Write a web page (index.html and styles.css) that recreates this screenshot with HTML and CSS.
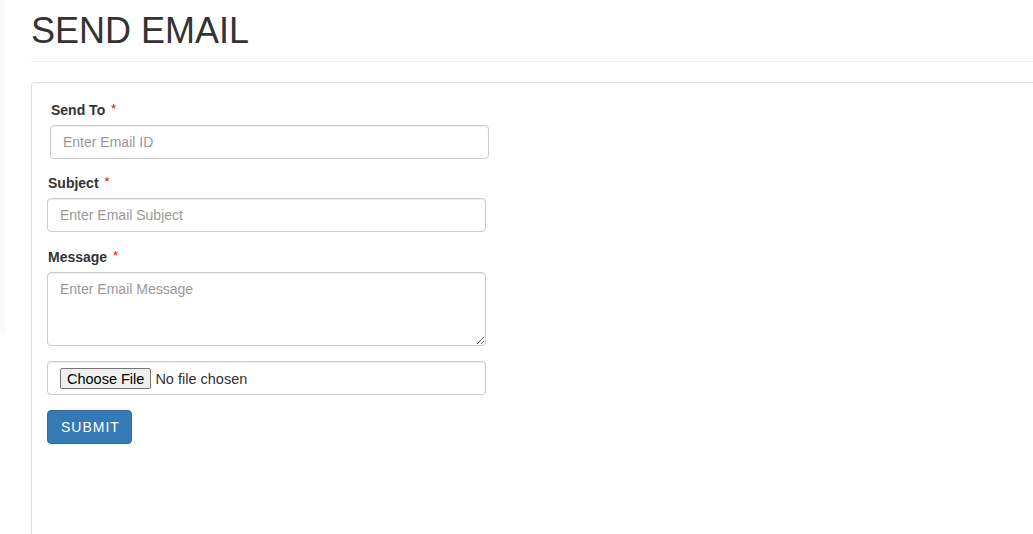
FILE: index.html
```html
<!DOCTYPE html>
<html lang="en">
<head>
<meta charset="utf-8">
<title>Send Email</title>
<link rel="stylesheet" href="styles.css">
</head>
<body>
<div class="layout">
  <div class="edge"></div>
  <main class="main">
    <div class="page-header">
      <h1>SEND EMAIL</h1>
    </div>
    <div class="panel">
      <form class="panel-body">
        <div class="form-group first">
          <label>Send To <span class="req">*</span></label>
          <input class="form-control" type="email" placeholder="Enter Email ID">
        </div>
        <div class="form-group">
          <label>Subject <span class="req">*</span></label>
          <input class="form-control" type="text" placeholder="Enter Email Subject">
        </div>
        <div class="form-group">
          <label>Message <span class="req">*</span></label>
          <textarea class="form-control textarea" placeholder="Enter Email Message"></textarea>
        </div>
        <div class="form-group">
          <input class="form-control file" type="file">
        </div>
        <button type="button" class="btn">SUBMIT</button>
      </form>
    </div>
  </main>
</div>
</body>
</html>
```
FILE: styles.css
```css
* { box-sizing: border-box; }
html, body { margin: 0; padding: 0; background: #fff; }
body {
  font-family: "Liberation Sans", Arial, Helvetica, sans-serif;
  font-size: 14px;
  line-height: 20px;
  color: #333;
  overflow: hidden;
  height: 534px;
}
.layout { display: flex; align-items: flex-start; }
.edge { width: 6px; height: 335px; background: #fafafa; flex: none; }
.main { flex: 1; padding-left: 25px; min-width: 0; }
.page-header {
  padding-top: 11px;
  padding-bottom: 10px;
  border-bottom: 1px solid #eee;
  margin-bottom: 20px;
}
.page-header h1 {
  margin: 0;
  font-size: 36px;
  font-weight: 500;
  line-height: 40px;
  color: #333;
}
.panel {
  border: 1px solid #ddd;
  border-radius: 4px;
  margin-right: -10px;
  height: 520px;
}
.panel-body { padding: 17px 15px 14px 15px; }
.form-group { margin-bottom: 15px; width: 439px; }
.form-group.first { margin-left: 3px; margin-bottom: 14px; }
label {
  display: block;
  font-weight: bold;
  margin-bottom: 5px;
  padding-left: 1px;
  line-height: 20px;
  height: 20px;
}
.req { color: #e00; font-weight: normal; font-size: 13px; line-height: 1; vertical-align: top; position: relative; top: 2px; margin-left: 2px; }
.form-control {
  display: block;
  width: 100%;
  height: 34px;
  padding: 6px 12px;
  font-family: inherit;
  font-size: 14px;
  line-height: 20px;
  color: #555;
  background: #fff;
  border: 1px solid #ccc;
  border-radius: 4px;
  box-shadow: inset 0 1px 1px rgba(0,0,0,.075);
  outline: none;
}
.form-control::placeholder { color: #999; }
.textarea { height: 74px; resize: vertical; }
.file { padding: 6px 12px; color: #333; font-size: 14.5px; line-height: 20px; }
.file::file-selector-button {
  font-family: inherit;
  font-size: 14.5px;
  padding: 0 6px;
  height: 21px;
  margin-right: 4px;
  background: #efefef;
  border: 1px solid #767676;
  border-radius: 2px;
  color: #000;
}
.btn {
  display: inline-block;
  height: 34px;
  padding: 6px 11px 6px 13px;
  font-family: inherit;
  font-size: 14px;
  line-height: 20px;
  letter-spacing: 1px;
  color: #fff;
  background: #337ab7;
  border: 1px solid #2e6da4;
  border-radius: 4px;
}
```
